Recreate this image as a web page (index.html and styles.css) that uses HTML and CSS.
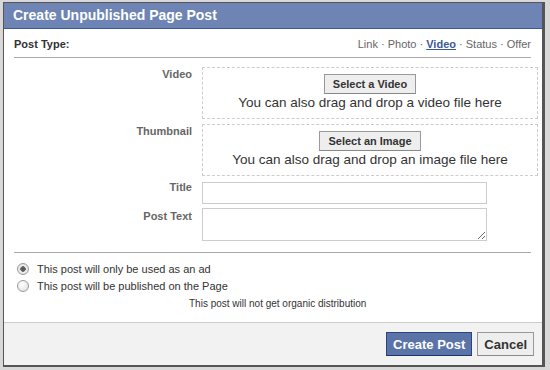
FILE: index.html
```html
<!DOCTYPE html>
<html lang="en">
<head>
    <meta charset="UTF-8">
    <title>Create Unpublished Page Post</title>
    <link rel="stylesheet" href="styles.css">
</head>
<body>
    <div class="dialog">
        <div class="dialog-title">Create Unpublished Page Post</div>

        <div class="dialog-body">
            <div class="type-row">
                <span class="type-label">Post Type:</span>
                <span class="type-links">
                    <a href="#">Link</a> &middot; <a href="#">Photo</a> &middot;
                    <a href="#" class="current">Video</a> &middot;
                    <a href="#">Status</a> &middot; <a href="#">Offer</a>
                </span>
            </div>

            <div class="form-grid">
                <label class="field-label">Video</label>
                <div class="drop-zone">
                    <button class="btn">Select a Video</button>
                    <div class="drop-hint">You can also drag and drop a video file here</div>
                </div>

                <label class="field-label">Thumbnail</label>
                <div class="drop-zone">
                    <button class="btn">Select an Image</button>
                    <div class="drop-hint">You can also drag and drop an image file here</div>
                </div>

                <label class="field-label label-input" for="title">Title</label>
                <input type="text" id="title" class="text-input">

                <label class="field-label" for="postText">Post Text</label>
                <textarea id="postText" class="text-area"></textarea>
            </div>

            <div class="options">
                <label class="option"><input type="radio" name="usage" checked> This post will only be used as an ad</label>
                <label class="option"><input type="radio" name="usage"> This post will be published on the Page</label>
                <div class="option-note">This post will not get organic distribution</div>
            </div>
        </div>

        <div class="dialog-footer">
            <button class="btn btn-primary">Create Post</button>
            <button class="btn btn-cancel">Cancel</button>
        </div>
    </div>
</body>
</html>
```

FILE: styles.css
```css
body {
    margin: 0;
    background: #d8d8d8;
    font-family: "Liberation Sans", Arial, sans-serif;
    font-size: 11px;
    color: #333;
}
.dialog {
    width: 542px;
    height: 365px;
    margin: 2px 0 0 3px;
    border: 1px solid #555;
    border-right-width: 3px;
    border-bottom-width: 2px;
    background: #fff;
    display: flex;
    flex-direction: column;
    box-sizing: border-box;
}
.dialog-title {
    background: #6d84b4;
    border-bottom: 1px solid #3b5998;
    color: #fff;
    font-size: 14px;
    font-weight: bold;
    height: 26px;
    line-height: 25px;
    padding-left: 9px;
    box-sizing: border-box;
}
.dialog-body {
    flex: 1;
    padding: 0 11px 0 10px;
}
.type-row {
    display: flex;
    justify-content: space-between;
    align-items: flex-end;
    height: 29px;
    padding-bottom: 7px;
    border-bottom: 1px solid #aaa;
    box-sizing: border-box;
}
.type-label {
    font-weight: bold;
    color: #333;
}
.type-links {
    color: #666;
    font-size: 11px;
}
.type-links a {
    color: #666;
    text-decoration: none;
}
.type-links a.current {
    color: #3b5998;
    font-weight: bold;
    text-decoration: underline;
}
.form-grid {
    display: grid;
    grid-template-columns: 178px 336px;
    column-gap: 10px;
    row-gap: 5px;
    margin-top: 9px;
}
.field-label {
    text-align: right;
    font-weight: bold;
    color: #666;
    padding-top: 1px;
}
.label-input {
    padding-top: 0;
}
.drop-zone {
    border: 1px dashed #ccc;
    height: 52px;
    box-sizing: border-box;
    text-align: center;
    padding-top: 6px;
}
.drop-hint {
    font-size: 13.5px;
    color: #333;
    margin-top: 1px;
}
.btn {
    font-family: "Liberation Sans", Arial, sans-serif;
    font-size: 11px;
    font-weight: bold;
    color: #333;
    background: #eee;
    border: 1px solid #999;
    border-bottom-color: #888;
    padding: 0 8px;
    height: 20px;
}
.text-input {
    width: 285px;
    height: 22px;
    border: 1px solid #ccc;
    box-sizing: border-box;
    margin: 1px 0 0;
}
.text-area {
    width: 285px;
    height: 33px;
    border: 1px solid #ccc;
    box-sizing: border-box;
    margin: -1px 0 0;
    resize: vertical;
}
.options {
    margin-top: 11px;
    border-top: 1px solid #aaa;
    padding-top: 7px;
}
.option {
    display: flex;
    align-items: center;
    height: 17px;
    color: #333;
}
.option input {
    appearance: none;
    margin: 0 8px 0 3px;
    width: 12px;
    height: 12px;
    border: 1px solid #9a9a9a;
    border-radius: 50%;
    background: radial-gradient(circle at 40% 35%, #fff, #ddd);
    box-sizing: border-box;
}
.option input:checked {
    background: radial-gradient(circle, #555 0, #666 2.5px, #eee 3px, #ddd 100%);
}
.option-note {
    font-size: 10px;
    color: #333;
    margin: 4px 0 0 175px;
}
.dialog-footer {
    background: #f2f2f2;
    border-top: 1px solid #ccc;
    height: 43px;
    box-sizing: border-box;
    display: flex;
    justify-content: flex-end;
    align-items: center;
    gap: 5px;
    padding-right: 8px;
}
.dialog-footer .btn {
    font-size: 13px;
    height: 24px;
    padding: 0 6px;
}
.btn-primary {
    background: #5b74a8;
    border-color: #29447e #29447e #1a356e;
    color: #fff;
}
.btn-cancel {
    background: #eee;
    border-color: #999 #999 #888;
    color: #333;
}
```
